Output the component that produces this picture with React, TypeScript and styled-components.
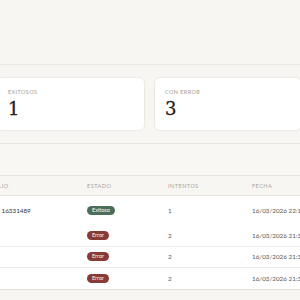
import React from "react"
import styled, { createGlobalStyle } from "styled-components"

const GlobalStyle = createGlobalStyle`
    html, body {
        margin: 0;
        padding: 0;
        background: #f7f6f2;
        overflow: hidden;
    }
    body {
        font-family: Lato, "Open Sans", sans-serif;
        width: 300px;
        height: 300px;
    }
`

type Row = {
    folio: string
    estado: "Exitoso" | "Error"
    intentos: number
    fecha: string
    tall?: boolean
}

const rows: Row[] = [
    { folio: "MX 16331489", estado: "Exitoso", intentos: 1, fecha: "16/03/2026 22:14", tall: true },
    { folio: "—", estado: "Error", intentos: 2, fecha: "16/03/2026 21:37" },
    { folio: "—", estado: "Error", intentos: 2, fecha: "16/03/2026 21:35" },
    { folio: "—", estado: "Error", intentos: 2, fecha: "16/03/2026 21:32" },
]

export default function App() {
    return (
        <SPage>
            <GlobalStyle />
            <SHeader />
            <SCards>
                <SCard>
                    <SCardLabel>Exitosos</SCardLabel>
                    <SCardValue>1</SCardValue>
                </SCard>
                <SCard>
                    <SCardLabel>Con error</SCardLabel>
                    <SCardValue>3</SCardValue>
                </SCard>
            </SCards>
            <SPanel>
                <SToolbar />
                <STable>
                    <colgroup>
                        <col style={{ width: 97 }} />
                        <col style={{ width: 81 }} />
                        <col style={{ width: 84 }} />
                        <col style={{ width: 140 }} />
                    </colgroup>
                    <thead>
                        <tr>
                            <STh>Folio</STh>
                            <STh>Estado</STh>
                            <STh>Intentos</STh>
                            <STh>Fecha</STh>
                        </tr>
                    </thead>
                    <tbody>
                        {rows.map((r, i) => (
                            <STr key={i} tall={r.tall}>
                                <STd>{r.folio}</STd>
                                <STd>
                                    <SBadge kind={r.estado}>{r.estado}</SBadge>
                                </STd>
                                <STd muted>{r.intentos}</STd>
                                <STd muted>{r.fecha}</STd>
                            </STr>
                        ))}
                    </tbody>
                </STable>
            </SPanel>
        </SPage>
    )
}

const SPage = styled.div`
    width: 300px;
    height: 300px;
    overflow: hidden;
    display: flex;
    flex-direction: column;
`
const SHeader = styled.div`
    height: 64px;
    flex-shrink: 0;
    border-bottom: 1px solid #ebe9e3;
`
const SCards = styled.div`
    display: grid;
    grid-template-columns: 148px 148px 148px;
    gap: 9px;
    margin: 12px 0 0 -3px;
`
const SCard = styled.div`
    background: #ffffff;
    border: 1px solid #ece9e3;
    border-radius: 6px;
    height: 54px;
    padding: 11px 10px 0 10px;
    box-sizing: border-box;
`
const SCardLabel = styled.div`
    font-size: 5.5px;
    letter-spacing: 0.4px;
    text-transform: uppercase;
    color: #a29d95;
`
const SCardValue = styled.div`
    font-family: "DejaVu Serif", "Liberation Serif", serif;
    font-size: 18px;
    color: #24211e;
    margin-top: 5px;
    line-height: 1;
    -webkit-text-stroke: 0.3px #24211e;
`
const SPanel = styled.div`
    margin: 12px 0 0 -20px;
    width: 420px;
    border-top: 1px solid #e9e6e0;
    border-bottom: 1px solid #e2dfd8;
    background: #ffffff;
`
const SToolbar = styled.div`
    height: 31px;
    background: #f8f7f4;
`
const STable = styled.table`
    border-collapse: collapse;
    table-layout: fixed;
    width: 402px;
`
const STh = styled.th`
    height: 19px;
    padding: 0 0 0 10px;
    text-align: left;
    font-weight: 400;
    font-size: 5.5px;
    letter-spacing: 0.5px;
    text-transform: uppercase;
    color: #a8a39b;
    background: #f7f6f3;
    border-top: 1px solid #e6e3dc;
    border-bottom: 1px solid #e6e3dc;
    white-space: nowrap;
`
const STr = styled.tr<{ tall?: boolean }>`
    height: ${({ tall }) => (tall ? "29px" : "21.5px")};
    & + & td {
        border-top: 1px solid #eeebe6;
    }
`
const STd = styled.td<{ muted?: boolean }>`
    padding: 0 0 0 10px;
    font-size: 6.3px;
    color: ${({ muted }) => (muted ? "#5a564f" : "#3a3632")};
    white-space: nowrap;
    vertical-align: middle;
`
const SBadge = styled.span<{ kind: "Exitoso" | "Error" }>`
    display: inline-block;
    height: 9px;
    line-height: 9px;
    padding: 0 5px;
    border-radius: 999px;
    font-size: 5.5px;
    color: #ffffff;
    background: ${({ kind }) => (kind === "Exitoso" ? "#4c6d59" : "#8a3a35")};
`
